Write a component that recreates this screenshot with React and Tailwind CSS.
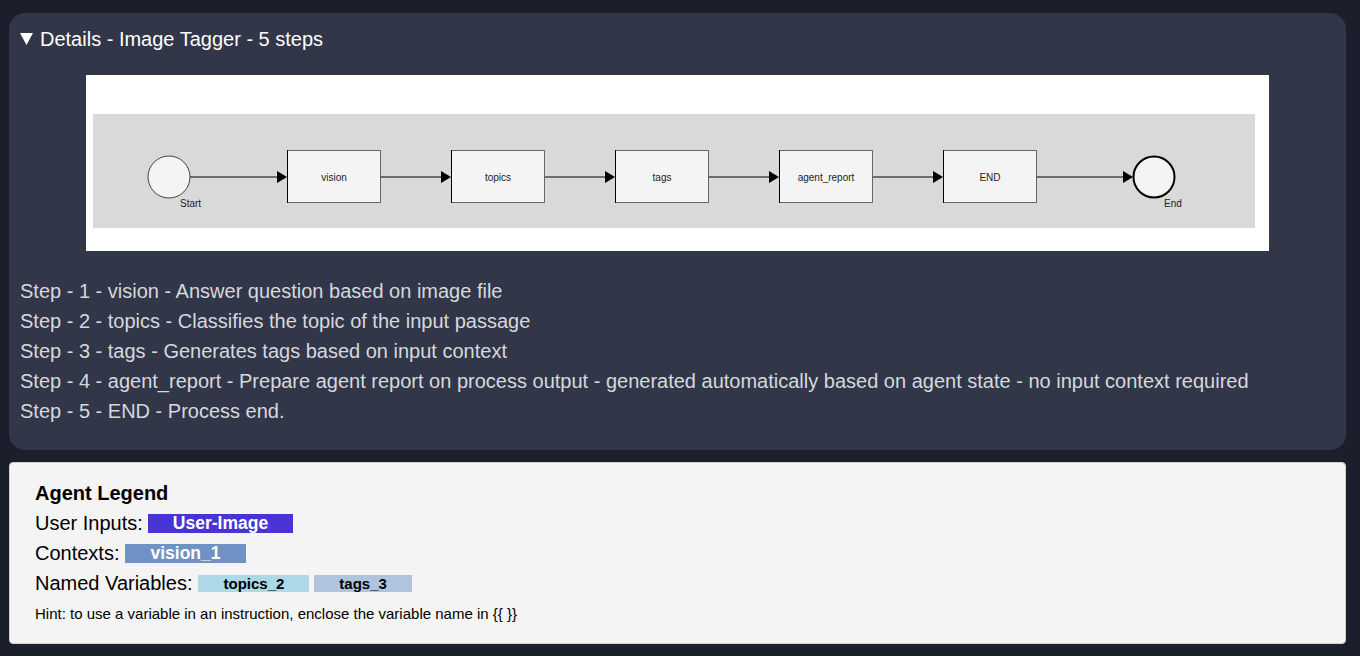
export default function App() {
  const steps = [
    "Step - 1 - vision - Answer question based on image file",
    "Step - 2 - topics - Classifies the topic of the input passage",
    "Step - 3 - tags - Generates tags based on input context",
    "Step - 4 - agent_report - Prepare agent report on process output - generated automatically based on agent state - no input context required",
    "Step - 5 - END - Process end.",
  ];
  const boxes = [
    { x: 201, label: "vision" },
    { x: 365, label: "topics" },
    { x: 529, label: "tags" },
    { x: 693, label: "agent_report" },
    { x: 857, label: "END" },
  ];

  // arrow segments: [from, to]
  const arrows = [[104, 201], [294, 365], [458, 529], [622, 693], [786, 857], [950, 1047]];

  return (
    <div className="min-h-screen bg-[#1b1f2c] pl-[9px] pr-[14px] pt-[13px] pb-[13px] font-['Liberation_Sans',Arial,sans-serif]">
      <div className="rounded-[16px] bg-[#323649] px-[11px] pt-[12px] pb-[24px]">
        <div className="flex items-center text-[20px] leading-[28px] text-white">
          <svg width="13" height="12" viewBox="0 0 13 12" className="mr-[7px] shrink-0">
            <polygon points="0,0 13,0 6.5,12" fill="#fff" />
          </svg>
          Details - Image Tagger - 5 steps
        </div>
        <div className="mx-auto mt-[22px] h-[176px] w-[1183px] bg-white">
          <svg width="1183" height="176" viewBox="0 0 1183 176">
            <rect x="7" y="39" width="1162" height="114" fill="#d9d9d9" />
            {arrows.map(([a, b], i) => (
              <g key={i}>
                <line x1={a} y1="102" x2={b - 9} y2="102" stroke="#000" strokeWidth="1" />
                <polygon points={`${b - 10},96 ${b},102 ${b - 10},108`} fill="#000" />
              </g>
            ))}
            <circle cx="83" cy="102" r="21" fill="#f4f4f4" stroke="#444" strokeWidth="1" />
            <text x="94" y="132" fontSize="10" fill="#222" fontFamily="Liberation Sans, Arial, sans-serif">Start</text>
            {boxes.map((b) => (
              <g key={b.label}>
                <rect x={b.x + 0.5} y="75.5" width="93" height="52" fill="#f4f4f4" stroke="#666" strokeWidth="1" />
                <line x1={b.x + 0.5} y1="75" x2={b.x + 0.5} y2="128" stroke="#000" />
                <text
                  x={b.x + 47}
                  y="105.5"
                  fontSize="10"
                  textAnchor="middle"
                  fill="#222"
                  fontFamily="Liberation Sans, Arial, sans-serif"
                >
                  {b.label}
                </text>
              </g>
            ))}
            <circle cx="1068" cy="102" r="20.5" fill="#f4f4f4" stroke="#000" strokeWidth="2" />
            <text x="1078" y="132" fontSize="10" fill="#222" fontFamily="Liberation Sans, Arial, sans-serif">End</text>
          </svg>
        </div>
        <div className="mt-[25px] text-[20px] leading-[30px] text-[#d6d8dd]">
          {steps.map((s) => (
            <div key={s}>{s}</div>
          ))}
        </div>
      </div>

      <div className="mt-[12px] rounded-[4px] border border-[#cfcfcf] bg-[#f4f4f4] px-[25px] pt-[15px] pb-[18px] text-black">
        <div className="text-[20px] font-bold leading-[30px]">Agent Legend</div>
        <div className="flex items-center text-[20px] leading-[30px]">
          User Inputs:
          <span className="ml-[5px] bg-[#4834d4] px-[25px] text-[17.5px] font-bold leading-[19px] text-white">User-Image</span>
        </div>
        <div className="flex items-center text-[20px] leading-[30px]">
          Contexts:
          <span className="ml-[6px] bg-[#6f92c4] px-[25px] text-[17.5px] font-bold leading-[19px] text-white">vision_1</span>
        </div>
        <div className="flex items-center text-[20px] leading-[30px]">
          Named Variables:
          <span className="ml-[6px] bg-[#add8e6] px-[25px] text-[15px] font-bold leading-[17px]">topics_2</span>
          <span className="ml-[5px] bg-[#b0c4de] px-[25px] text-[15px] font-bold leading-[17px]">tags_3</span>
        </div>
        <div className="mt-[5px] text-[15px] leading-[22px]">
          Hint: to use a variable in an instruction, enclose the variable name in {"{{ }}"}
        </div>
      </div>
    </div>
  );
}
